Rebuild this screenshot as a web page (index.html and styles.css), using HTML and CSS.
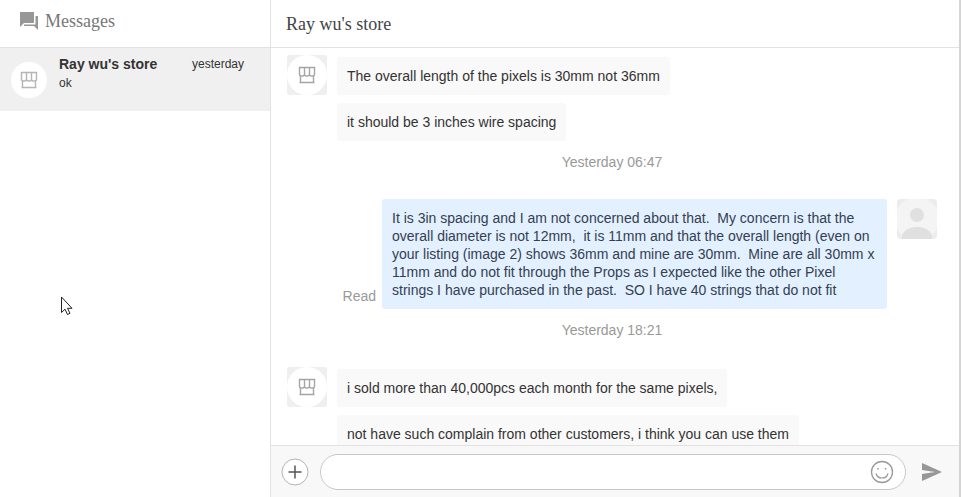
FILE: index.html
```html
<!DOCTYPE html>
<html lang="en">
<head>
<meta charset="utf-8">
<title>Messages</title>
<link rel="stylesheet" href="styles.css">
</head>
<body>
<svg class="defs" aria-hidden="true">
  <symbol id="shop" viewBox="0 0 18 18">
    <path d="M1.500 1.500h15v7.500c-1 1.500-4 1.500-5 0c-1 1.500-4 1.500-5 0c-1 1.500-4 1.500-5 0zM6.500 1.500v7.500M11.500 1.500v7.500M2.500 10v6.500M15.500 10v6.500M1.500 16.500h15" fill="none" stroke="currentColor" stroke-width="1.400"/>
  </symbol>
</svg>
<div class="app">
  <aside class="sidebar">
    <header class="bar sidebar-bar">
      <svg class="bar-icon" viewBox="0 0 18 18" aria-hidden="true"><path d="M0 0h14v11H4l-4 4zM15.500 4H18v14l-4-4H4v-1.500h11.500z" fill="#979797"/></svg>
      <h1 class="title title-muted">Messages</h1>
    </header>
    <a class="thread" href="#chat">
      <span class="thread-avatar"><svg class="shop"><use href="#shop"/></svg></span>
      <span class="thread-body">
        <span class="thread-top"><strong class="thread-name">Ray wu's store</strong><time class="thread-time">yesterday</time></span>
        <span class="thread-preview">ok</span>
      </span>
    </a>
  </aside>
  <main class="chat" id="chat">
    <header class="bar chat-bar"><h2 class="title">Ray wu's store</h2></header>
    <div class="messages">
      <div class="row">
        <span class="avatar"><span class="avatar-disc"><svg class="shop"><use href="#shop"/></svg></span></span>
        <div class="stack">
          <p class="bubble">The overall length of the pixels is 30mm not 36mm</p>
          <p class="bubble">it should be 3 inches wire spacing</p>
        </div>
      </div>
      <time class="date">Yesterday 06:47</time>
      <div class="row row-own">
        <span class="status">Read</span>
        <p class="bubble bubble-own">It is 3in spacing and I am not concerned about that.&nbsp; My concern is that the overall diameter is not 12mm,&nbsp; it is 11mm and that the overall length (even on your listing (image 2) shows 36mm and mine are 30mm.&nbsp; Mine are all 30mm x 11mm and do not fit through the Props as I expected like the other Pixel strings I have purchased in the past.&nbsp; SO I have 40 strings that do not fit</p>
        <svg class="avatar-own" viewBox="0 0 40 40" aria-hidden="true"><rect width="40" height="40" fill="#ececec"/><circle cx="20" cy="20" r="22" fill="#f4f4f4"/><circle cx="20" cy="16" r="7" fill="#e0e0e0"/><path d="M5 40v-4c3-6 9-8 15-8s12 2 15 8v4z" fill="#e0e0e0"/></svg>
      </div>
      <time class="date">Yesterday 18:21</time>
      <div class="row">
        <span class="avatar"><span class="avatar-disc"><svg class="shop"><use href="#shop"/></svg></span></span>
        <div class="stack">
          <p class="bubble">i sold more than 40,000pcs each month for the same pixels,</p>
          <p class="bubble">not have such complain from other customers, i think you can use them</p>
        </div>
      </div>
    </div>
    <form class="composer">
      <button class="icon-button" type="button" aria-label="Add attachment"><svg class="icon-round" viewBox="0 0 28 28"><circle cx="14" cy="14" r="13" fill="#fff" stroke="#b5b5b5"/><path d="M14 7.500v13M7.500 14h13" stroke="#555" stroke-width="1.500"/></svg></button>
      <div class="field">
        <input class="field-input" type="text" aria-label="Message">
        <button class="icon-button" type="button" aria-label="Emoji"><svg class="icon-smile" viewBox="0 0 24 24" fill="none" stroke="#999"><circle cx="12" cy="12" r="10.500" stroke-width="1.300"/><path d="M6 13.500c1.500 6 10.500 6 12 0" stroke-width="1.200"/><path d="M8 8v1.500M15.500 8v1.500" stroke-width="1.500"/></svg></button>
      </div>
      <button class="icon-button" type="submit" aria-label="Send"><svg class="icon-send" viewBox="0 0 22 18"><path d="M1 0l20 9-20 9v-7l13-2-13-2z" fill="#979797"/></svg></button>
    </form>
  </main>
</div>
<svg class="pointer" viewBox="0 0 14 20" aria-hidden="true"><path d="M1.500 1v15.500l3.500-3.300 2.500 5.300 2.500-1.200-2.500-5h4.500z" fill="#fff" stroke="#222"/></svg>
</body>
</html>
```

FILE: styles.css
```css
* {
  box-sizing: border-box;
}

body {
  margin: 0;
  font: 14px/18px "Liberation Sans", Arial, sans-serif;
  color: #333;
  background: #fff;
}

h1, h2, p {
  margin: 0;
}

svg {
  display: block;
}

.defs {
  display: none;
}

.app {
  display: flex;
  height: 100vh;
  border-right: 2px solid #d4d4d4;
}

.sidebar {
  flex: none;
  width: 271px;
  border-right: 1px solid #e2e2e2;
}

.bar {
  display: flex;
  flex: none;
  align-items: center;
  height: 48px;
  border-bottom: 1px solid #e2e2e2;
}

.sidebar-bar {
  gap: 7px;
  padding: 0 20px 5px;
}

.chat-bar {
  padding: 0 15px;
}

.bar-icon {
  width: 18px;
  height: 18px;
}

.title {
  font: 18px/24px "Liberation Serif", "Times New Roman", serif;
  color: #444;
}

.title-muted {
  color: #777;
}

.thread {
  display: flex;
  gap: 12px;
  height: 63px;
  padding: 6px 26px 6px 11px;
  color: #333;
  text-decoration: none;
  background: #f0f0f0;
}

.thread-avatar {
  display: grid;
  flex: none;
  place-items: center;
  align-self: center;
  width: 36px;
  height: 36px;
  border-radius: 50%;
  color: #b5b5b5;
  background: #fff;
}

.shop {
  width: 18px;
  height: 18px;
}

.thread-body {
  flex: 1;
}

.thread-top {
  display: flex;
  align-items: center;
  justify-content: space-between;
  height: 20px;
}

.thread-name {
  font-size: 14px;
}

.thread-time,
.thread-preview {
  font-size: 12px;
}

.thread-preview {
  display: block;
}

.chat {
  display: flex;
  flex: 1;
  flex-direction: column;
  min-width: 0;
}

.messages {
  flex: 1;
  min-height: 0;
  padding: 7px 22px 0 16px;
  overflow: hidden;
}

.row {
  display: flex;
  gap: 10px;
}

.row-own {
  justify-content: flex-end;
}

.avatar {
  flex: none;
  width: 40px;
  height: 40px;
  border-radius: 2px;
  color: #a5a5a5;
  background: #efefef;
  overflow: hidden;
}

.avatar-disc {
  display: grid;
  place-items: center;
  width: 40px;
  height: 40px;
  border-radius: 50%;
  background: #fff;
}

.avatar-own {
  flex: none;
  width: 40px;
  height: 40px;
  border-radius: 4px;
}

.stack {
  display: flex;
  flex-direction: column;
  gap: 8px;
  align-items: flex-start;
  padding-top: 2px;
}

.bubble {
  padding: 10px;
  border-radius: 3px;
  background: #f9f9f9;
}

.bubble-own {
  max-width: 505px;
  color: #334050;
  background: #e3f0ff;
}

.status {
  align-self: flex-end;
  margin-right: -4px;
  padding-bottom: 4px;
  color: #999;
}

.date {
  display: block;
  padding: 12px 0 28px;
  color: #999;
  text-align: center;
}

.composer {
  display: flex;
  flex: none;
  gap: 11px;
  align-items: center;
  height: 52px;
  padding: 0 16px 0 10px;
  border-top: 1px solid #e2e2e2;
  background: #f8f8f8;
}

.icon-button {
  flex: none;
  padding: 0;
  border: 0;
  background: none;
}

.icon-round {
  width: 28px;
  height: 28px;
}

.icon-smile {
  width: 24px;
  height: 24px;
}

.icon-send {
  width: 22px;
  height: 18px;
}

.field {
  display: flex;
  flex: 1;
  align-items: center;
  height: 36px;
  margin-right: 4px;
  padding: 0 11px;
  border: 1px solid #c8c8c8;
  border-radius: 18px;
  background: #fff;
}

.field-input {
  flex: 1;
  min-width: 0;
  border: 0;
  outline: 0;
  font: inherit;
  background: none;
}

.pointer {
  position: absolute;
  top: 296px;
  left: 60px;
  width: 14px;
  height: 20px;
}
```
